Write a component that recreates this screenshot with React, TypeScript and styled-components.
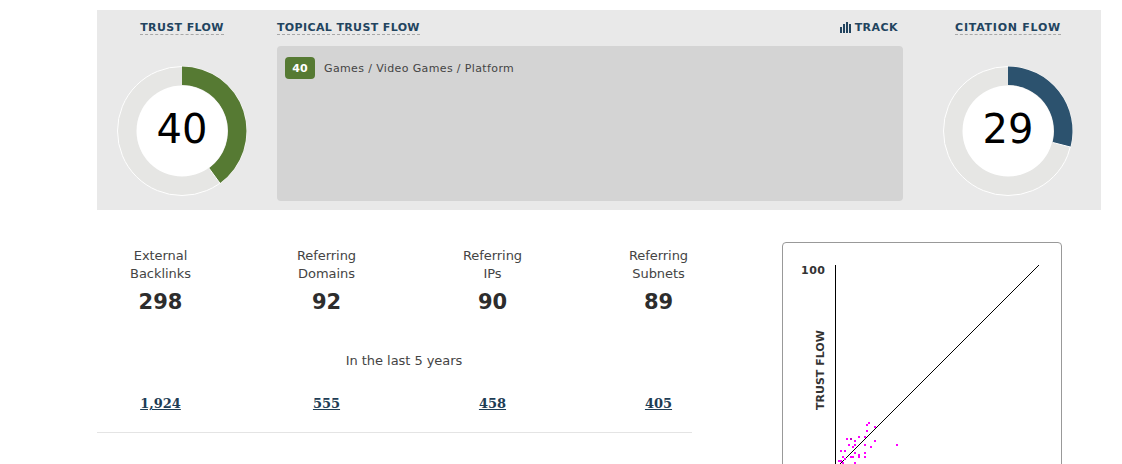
import React from "react";
import styled, { createGlobalStyle } from "styled-components";

const Global = createGlobalStyle`
  html, body { margin: 0; padding: 0; background: #fff; height: 464px; overflow: hidden; }
  body { font-family: "DejaVu Sans", Verdana, sans-serif; color: #333; }
`;
const Page = styled.div`
  padding: 10px 21px 0 97px;
  width: 1004px;
`;
const Panel = styled.section`
  display: grid;
  grid-template-columns: 170px 626px 188px;
  column-gap: 10px;
  height: 200px;
  background: #e9e9e9;
`;
const FlowColumn = styled.div<{ $shift?: number }>`
  display: flex;
  flex-direction: column;
  align-items: center;
  padding: 11px 0 0 ${(p) => p.$shift ?? 0}px;
`;
const Heading = styled.span<{ $spacing?: number }>`
  display: inline-block;
  font-size: 11px;
  line-height: 13px;
  font-weight: 700;
  letter-spacing: ${(p) => p.$spacing ?? 0.37}px;
  color: #22445f;
  border-bottom: 1px dashed #a8a8a8;
`;
const DonutBox = styled.div`
  position: relative;
  width: 132px;
  height: 132px;
  margin-top: 30px;
`;
const DonutValue = styled.div`
  position: absolute;
  inset: 0 0 4px 0;
  display: flex;
  align-items: center;
  justify-content: center;
  font-size: 40px;
  color: #000;
`;
const TopicalColumn = styled.div`
  display: flex;
  flex-direction: column;
  padding-top: 11px;
`;
const TopicalHead = styled.div`
  display: flex;
  justify-content: space-between;
  align-items: flex-start;
  height: 25px;
`;
const Track = styled.span`
  display: inline-flex;
  align-items: center;
  gap: 3px;
  margin-right: 5px;
  font-size: 11px;
  line-height: 13px;
  font-weight: 700;
  letter-spacing: 0.45px;
  color: #22445f;
`;
const TopicBox = styled.div`
  height: 155px;
  box-sizing: border-box;
  background: #d4d4d4;
  border-radius: 4px;
  padding: 11px 8px;
  display: flex;
  align-items: flex-start;
  gap: 9px;
`;
const Badge = styled.span`
  width: 30px;
  height: 22px;
  border-radius: 4px;
  background: #567a33;
  color: #fff;
  font-size: 11px;
  font-weight: 700;
  display: flex;
  align-items: center;
  justify-content: center;
`;
const TopicText = styled.span`
  font-size: 11px;
  line-height: 24px;
  letter-spacing: 0.37px;
  color: #444;
`;
const Lower = styled.div`
  display: flex;
  margin-top: 32px;
`;
const Stats = styled.div`
  width: 685px;
  flex: none;
`;
const StatGrid = styled.div`
  display: grid;
  grid-template-columns: repeat(4, 127px);
  column-gap: 39px;
  text-align: center;
`;
const StatLabel = styled.div`
  font-size: 13px;
  line-height: 18px;
  padding-top: 5px;
  letter-spacing: -0.05px;
  color: #444;
`;
const StatValue = styled.div`
  font-size: 21px;
  line-height: 28px;
  margin-top: 5px;
  font-weight: 700;
  color: #2d2d2d;
`;
const Period = styled.div`
  width: 614px;
  text-align: center;
  font-size: 13px;
  line-height: 18px;
  margin-top: 36px;
  letter-spacing: -0.05px;
  color: #444;
`;
const LinkGrid = styled(StatGrid)`
  margin-top: 23px;
`;
const HistoryLink = styled.a`
  font-family: "DejaVu Serif", serif;
  font-size: 13px;
  line-height: 18px;
  font-weight: 700;
  color: #1e3d55;
  text-decoration: underline;
`;
const Rule = styled.hr`
  width: 595px;
  margin: 19px 0 0;
  border: 0;
  border-top: 1px solid #e4e4e4;
`;
const ChartCard = styled.div`
  width: 278px;
  height: 400px;
  flex: none;
  border: 1px solid #999;
  border-radius: 4px;
  background: #fff;
`;
const ChartLabel = styled.text`
  font-family: "DejaVu Sans", sans-serif;
  font-weight: 700;
  font-size: 11px;
  fill: #333;
`;

function Donut({ value, color }: { value: number; color: string }) {
  const cx = 66, cy = 66, R = 65, r = 46;
  const a = (value / 100) * 2 * Math.PI;
  const p = (rad: number, t: number) =>
    `${(cx + rad * Math.sin(t)).toFixed(2)} ${(cy - rad * Math.cos(t)).toFixed(2)}`;
  const large = value > 50 ? 1 : 0;
  const outer = R - 0.5;
  return (
    <DonutBox>
      <svg width="132" height="132" viewBox="0 0 132 132" style={{ display: "block" }}>
        <circle cx={cx} cy={cy} r={R - 0.5} fill="#e6e6e4" stroke="#fff" strokeWidth="1" />
        <path
          d={`M${p(outer, 0)} A${outer} ${outer} 0 ${large} 1 ${p(outer, a)} L${p(r, a)} A${r} ${r} 0 ${large} 0 ${p(r, 0)} Z`}
          fill={color}
        />
        <line
          x1={cx + r * Math.sin(a)}
          y1={cy - r * Math.cos(a)}
          x2={cx + R * Math.sin(a)}
          y2={cy - R * Math.cos(a)}
          stroke="#fff"
          strokeWidth="1"
        />
        <circle cx={cx} cy={cy} r={r - 0.5} fill="#fff" />
      </svg>
      <DonutValue>{value}</DonutValue>
    </DonutBox>
  );
}

const dots: [number, number, string?][] = [
  [297, 564], [291, 570], [315, 576], [291, 588], [231, 612], [243, 612, "#c400c4"], [267, 606], [285, 606],
  [255, 618], [315, 618], [237, 630], [255, 630], [285, 630], [381, 630], [249, 636], [303, 636],
  [213, 648], [225, 648], [255, 654], [285, 654], [219, 666], [243, 666], [249, 666], [267, 660],
  [267, 666], [285, 666], [225, 672], [207, 678], [213, 678], [219, 684], [255, 684],
];

function Scatter() {
  // svg origin sits at page (783, 243)
  const ox = 783, oy = 243;
  return (
    <svg width="278" height="400" viewBox="0 0 278 400" style={{ display: "block" }}>
      <ChartLabel x="18" y="31" textLength="24">100</ChartLabel>
      <ChartLabel transform="translate(41 167) rotate(-90)">TRUST FLOW</ChartLabel>
      <line x1="52.5" y1="22" x2="52.5" y2="400" stroke="#000" strokeWidth="1" />
      <line x1="256" y1="22" x2="35" y2="243" stroke="#000" strokeWidth="1" />
      {dots.map(([x, y, c], i) => (
        <rect
          key={i}
          x={770 + Math.round(x / 3) - 1 - ox}
          y={235 + Math.round(y / 3) - 1 - oy}
          width="2"
          height="2"
          fill={c ?? "#ff00ff"}
        />
      ))}
    </svg>
  );
}

const stats = [
  { l1: "External", l2: "Backlinks", v: "298", h: "1,924" },
  { l1: "Referring", l2: "Domains", v: "92", h: "555" },
  { l1: "Referring", l2: "IPs", v: "90", h: "458" },
  { l1: "Referring", l2: "Subnets", v: "89", h: "405" },
];

export default function App() {
  return (
    <Page>
      <Global />
      <Panel>
        <FlowColumn>
          <Heading>TRUST FLOW</Heading>
          <Donut value={40} color="#567a33" />
        </FlowColumn>
        <TopicalColumn>
          <TopicalHead>
            <Heading>TOPICAL TRUST FLOW</Heading>
            <Track>
              <svg width="12" height="11" viewBox="0 0 12 11">
                <rect x="0" y="5" width="2" height="6" fill="#22445f" />
                <rect x="3" y="2" width="2" height="9" fill="#22445f" />
                <rect x="6" y="0" width="2" height="11" fill="#22445f" />
                <rect x="9" y="2" width="2" height="9" fill="#22445f" />
              </svg>
              TRACK
            </Track>
          </TopicalHead>
          <TopicBox>
            <Badge>40</Badge>
            <TopicText>Games / Video Games / Platform</TopicText>
          </TopicBox>
        </TopicalColumn>
        <FlowColumn $shift={2}>
          <Heading $spacing={0.75}>CITATION FLOW</Heading>
          <Donut value={29} color="#2c526e" />
        </FlowColumn>
      </Panel>
      <Lower>
        <Stats>
          <StatGrid>
            {stats.map((s) => (
              <div key={s.v}>
                <StatLabel>{s.l1}<br />{s.l2}</StatLabel>
                <StatValue>{s.v}</StatValue>
              </div>
            ))}
          </StatGrid>
          <Period>In the last 5 years</Period>
          <LinkGrid>
            {stats.map((s) => (
              <div key={s.h}><HistoryLink href="#">{s.h}</HistoryLink></div>
            ))}
          </LinkGrid>
          <Rule />
        </Stats>
        <ChartCard><Scatter /></ChartCard>
      </Lower>
    </Page>
  );
}
